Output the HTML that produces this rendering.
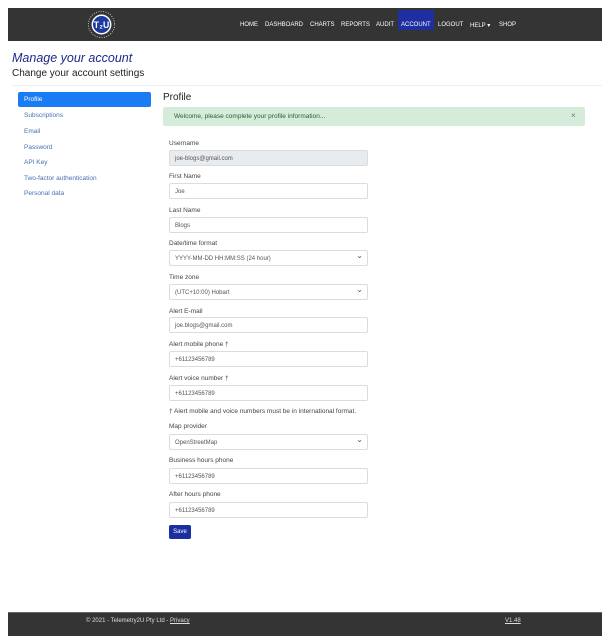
<!DOCTYPE html><html><head><style>
body{margin:0;width:615px;height:640px;background:#fff;font-family:"Liberation Sans",sans-serif;position:relative;overflow:hidden}
.a{position:absolute}
.nav{left:8px;top:8px;width:594px;height:33px;background:#343434}
.ni{position:absolute;top:14px;font-size:6px;color:#fff}
.lbl{position:absolute;left:169px;font-size:6.5px;color:#444}
.in{position:absolute;left:169px;height:16px;border:1px solid #dcdcdc;border-radius:2px;font-size:6px;color:#555;line-height:16px;padding-left:5px;box-sizing:border-box;width:199px}
.sel::after{content:"⌄";position:absolute;right:4px;top:-3px;font-size:8px}
.sb{position:absolute;left:24px;font-size:6.5px;color:#4a6fb0}
</style></head><body>
<div class="a nav">
<svg class="a" style="left:77px;top:0px" width="33" height="33" viewBox="0 0 34 34"><circle cx="17" cy="17" r="9.5" fill="#1a3aa0" stroke="#fff" stroke-width="1.5"/><text x="17" y="20.5" font-size="9" fill="#fff" text-anchor="middle" font-family="Liberation Sans" font-weight="bold">T₂U</text><circle cx="17" cy="17" r="13.5" fill="none" stroke="#ccc" stroke-width="1" stroke-dasharray="1 1.5"/></svg>
<div class="a" style="left:390px;top:2px;width:36px;height:20px;background:#1e2fa0"></div>
<span class="ni" style="left:232px">HOME</span>
<span class="ni" style="left:257px">DASHBOARD</span>
<span class="ni" style="left:302px">CHARTS</span>
<span class="ni" style="left:333px">REPORTS</span>
<span class="ni" style="left:368px">AUDIT</span>
<span class="ni" style="left:393px">ACCOUNT</span>
<span class="ni" style="left:430px">LOGOUT</span>
<span class="ni" style="left:462px">HELP ▾</span>
<span class="ni" style="left:491px">SHOP</span>
</div>
<div class="a" style="left:12px;top:51px;font-size:12.5px;font-style:italic;color:#1c2b8a">Manage your account</div>
<div class="a" style="left:12px;top:68px;font-size:10px;color:#222">Change your account settings</div>
<div class="a" style="left:12px;top:85px;width:590px;height:1px;background:#eee"></div>
<div class="a" style="left:18px;top:92px;width:133px;height:15px;background:#1a7cf5;border-radius:2px"></div>
<span class="sb" style="top:96px;color:#fff">Profile</span>
<span class="sb" style="top:112px">Subscriptions</span>
<span class="sb" style="top:128px">Email</span>
<span class="sb" style="top:144px">Password</span>
<span class="sb" style="top:159px">API Key</span>
<span class="sb" style="top:175px">Two-factor authentication</span>
<span class="sb" style="top:190px">Personal data</span>
<div class="a" style="left:163px;top:92px;font-size:10px;color:#222">Profile</div>
<div class="a" style="left:163px;top:107px;width:422px;height:19px;background:#d5ecda;border-radius:2px"></div>
<div class="a" style="left:174px;top:113px;font-size:6.5px;color:#2c5a38">Welcome, please complete your profile information...</div>
<div class="a" style="left:571px;top:111px;font-size:8px;color:#777">×</div>
<span class="lbl" style="top:140px">Username</span><div class="in" style="top:150px;background:#e9ecef">joe-blogs@gmail.com</div>
<span class="lbl" style="top:173px">First Name</span><div class="in" style="top:183px">Joe</div>
<span class="lbl" style="top:207px">Last Name</span><div class="in" style="top:217px">Blogs</div>
<span class="lbl" style="top:240px">Date/time format</span><div class="in sel" style="top:250px">YYYY-MM-DD HH:MM:SS (24 hour)</div>
<span class="lbl" style="top:274px">Time zone</span><div class="in sel" style="top:284px">(UTC+10:00) Hobart</div>
<span class="lbl" style="top:308px">Alert E-mail</span><div class="in" style="top:317px">joe.blogs@gmail.com</div>
<span class="lbl" style="top:341px">Alert mobile phone †</span><div class="in" style="top:351px">+61123456789</div>
<span class="lbl" style="top:375px">Alert voice number †</span><div class="in" style="top:385px">+61123456789</div>
<span class="lbl" style="top:408px">† Alert mobile and voice numbers must be in international format.</span>
<span class="lbl" style="top:423px">Map provider</span><div class="in sel" style="top:434px">OpenStreetMap</div>
<span class="lbl" style="top:457px">Business hours phone</span><div class="in" style="top:468px">+61123456789</div>
<span class="lbl" style="top:491px">After hours phone</span><div class="in" style="top:502px">+61123456789</div>
<div class="a" style="left:169px;top:525px;width:22px;height:14px;background:#1a2fa0;border-radius:2px;color:#fff;font-size:6px;line-height:14px;text-align:center">Save</div>
<div class="a" style="left:8px;top:612px;width:594px;height:23px;background:#343434;border-top:1px solid #666"></div>
<div class="a" style="left:86px;top:618px;font-size:6px;color:#ddd">© 2021 - Telemetry2U Pty Ltd - <u>Privacy</u></div>
<div class="a" style="left:505px;top:618px;font-size:6px;color:#ddd"><u>V1.48</u></div>
</body></html>
